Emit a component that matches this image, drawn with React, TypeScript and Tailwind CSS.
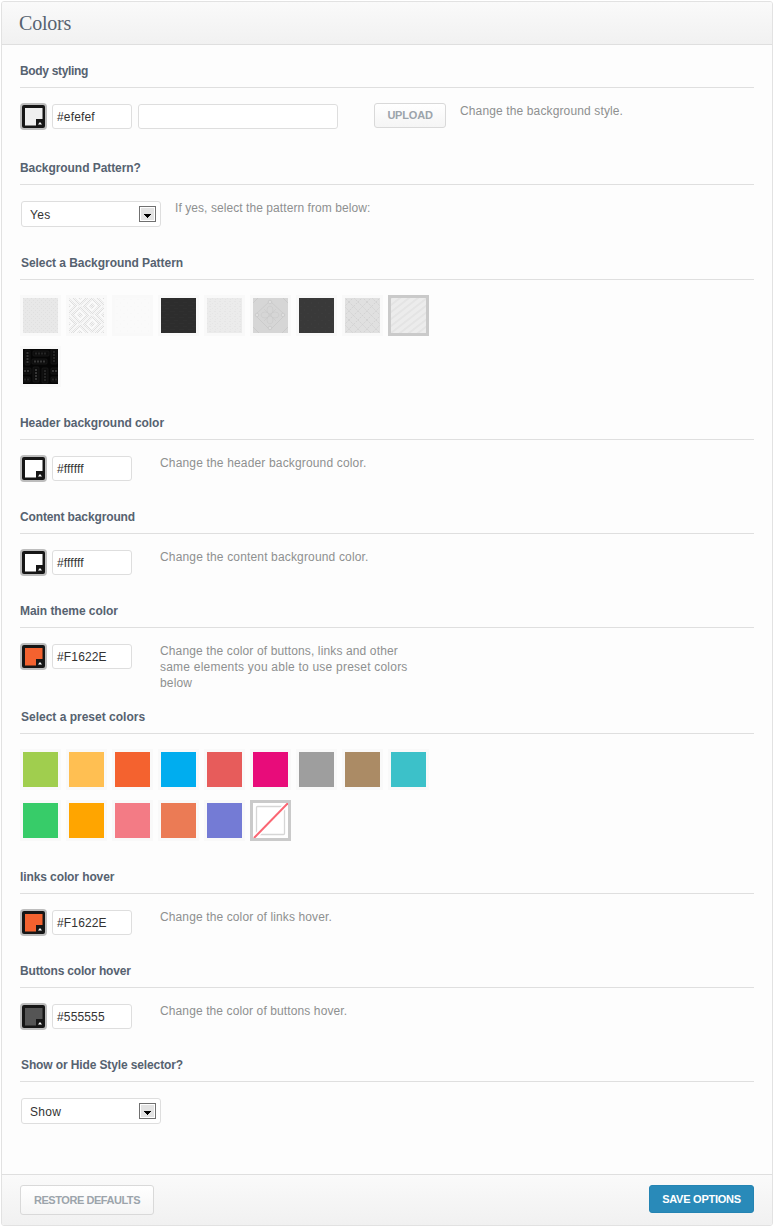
import React from "react";

function Section({ title, className, spacing, children }: { title: string; className: string; spacing: string; children: React.ReactNode }) {
  return (
    <section className={`shrink-0 ${className}`}>
      <h2 className={`flex h-[43px] items-center border-b border-[#dfdfdf] pt-[9px] text-[12px] font-bold text-[#566270] ${spacing}`}>
        <span className="whitespace-nowrap">{title}</span>
      </h2>
      {children}
    </section>
  );
}

function Picker({ color, value }: { color: string; value: string }) {
  return (
    <>
      <svg width="27" height="27" viewBox="0 0 27 27" className="shrink-0">
        <rect width="27" height="27" rx="4" fill="#bdbdbd" />
        <rect x="2" y="2" width="23" height="23" rx="2" fill="#161616" />
        <rect x="5" y="5" width="17.5" height="17.5" fill={color} />
        <rect x="16" y="16" width="8" height="8" fill="#161616" />
        <path d="M18 21.5h4l-2-2.5z" fill="#fff" />
      </svg>
      <div className="ml-[5px] mt-px flex h-[25px] w-[80px] items-center rounded-[3px] border border-[#dedede] bg-white pl-1 text-[12px] text-[#333]">
        <span className="tracking-[0.15px]">{value}</span>
      </div>
    </>
  );
}

function Note({ className = "", children }: { className?: string; children: React.ReactNode }) {
  return <p className={`whitespace-nowrap text-[12px] leading-4 text-[#8e9090] ${className}`}>{children}</p>;
}

function ColorRow({ color, value, spacing = "tracking-[0.16px]", children }: { color: string; value: string; spacing?: string; children: React.ReactNode }) {
  return (
    <div className="flex items-start pt-[15px]">
      <Picker color={color} value={value} />
      <Note className={`ml-7 ${spacing}`}>{children}</Note>
    </div>
  );
}

function Select({ value }: { value: string }) {
  return (
    <div className="ml-px flex h-[26px] w-[140px] shrink-0 items-center justify-between rounded-[3px] border border-[#dedede] bg-white pl-2 pr-1 text-[12px] text-[#333]">
      <span className="mt-px tracking-[0.3px]">{value}</span>
      <svg width="17" height="16" viewBox="0 0 17 16">
        <rect x=".5" y=".5" width="16" height="15" fill="#fff" stroke="#707070" />
        <rect x="2" y="2" width="13" height="12" fill="#e3e3e3" />
        <path d="M5 8h7v1h-1v1h-1v1H9v1H8v-1H7v-1H6V9H5z" fill="#000" />
      </svg>
    </div>
  );
}

const diamonds = [[11, -1], [11, 17], [11, 35], [23, 8], [23, 26], [-1, 8], [-1, 26], [35, -1], [35, 17], [35, 35]];

function Pattern({ index }: { index: number }) {
  const id = `pattern-${index}`;
  const bases = ["#e8e8e8", "#f6f6f6", "#fafafa", "#2d2d2d", "#ebebeb", "#d6d6d6", "#393939", "#e0e0e0", "#ececec", "#050505"];
  return (
    <svg width="35" height="35" viewBox="0 0 35 35">
      <defs>
        {index === 0 && <pattern id={id} width="4" height="4" patternUnits="userSpaceOnUse"><path d="M0 0h1v1H0zM2 2h1v1H2z" fill="#e0e0e0" /></pattern>}
        {index === 1 && <pattern id={id} width="2" height="2" patternUnits="userSpaceOnUse"><path d="M0 0h1v1H0zM1 1h1v1H1z" fill="#dedede" /></pattern>}
        {index === 2 && <pattern id={id} width="7" height="7" patternUnits="userSpaceOnUse"><path d="M1 1h2v1H1zM5 4h1v2H5z" fill="#f8f8f8" /></pattern>}
        {index === 3 && <pattern id={id} width="9" height="6" patternUnits="userSpaceOnUse"><path d="M0 1h5v1H0zM4 4h4v1H4z" fill="#303030" /></pattern>}
        {index === 4 && <pattern id={id} width="5" height="5" patternUnits="userSpaceOnUse"><path d="M0 0h1v1H0zM2 3h2v1H2zM3 1h1v1H3z" fill="#e5e5e5" /></pattern>}
        {index === 6 && <pattern id={id} width="7" height="7" patternUnits="userSpaceOnUse"><path d="M1 1h2v1H1zM5 4h1v2H5z" fill="#3c3c3c" /></pattern>}
        {index === 7 && <pattern id={id} x="4" y="4" width="18" height="18" patternUnits="userSpaceOnUse"><path d="M0 0l18 18M18 0L0 18M9 0l9 9-9 9-9-9z" fill="none" stroke="#cfcfcf" strokeDasharray="2 1" strokeWidth=".8" /></pattern>}
        {index === 8 && <pattern id={id} width="9" height="7" patternUnits="userSpaceOnUse"><path d="M-2 8.5L11-1.5M-2 1.5L2-1.5M7 8.5l4-3" fill="none" stroke="#e4e4e4" strokeWidth="2" /></pattern>}
      </defs>
      <rect width="35" height="35" fill={bases[index]} />
      {index !== 5 && index !== 9 && <rect width="35" height="35" fill={`url(#${id})`} />}
      {index === 1 && diamonds.map(([x, y]) => (
        <g key={`${x},${y}`} transform={`translate(${x} ${y})`} fill="none" stroke="#fafafa">
          <path d="M0-4.5L4.5 0 0 4.5-4.5 0z" strokeWidth="2" />
          <path d="M0-9.5L10 0 0 9.5-10 0z" strokeWidth="1" />
        </g>
      ))}
      {index === 5 && (
        <g fill="none" stroke="#cacaca" strokeWidth=".9">
          <path d="M17 3l15 14-15 15L2 17zM0 5l5-5M30 0l5 5M0 29l6 6M29 35l6-6" />
          <g strokeWidth=".6">
            <ellipse cx="17" cy="12" rx="3" ry="4" /><ellipse cx="17" cy="22" rx="3" ry="4" />
            <ellipse cx="12" cy="17" rx="4" ry="3" /><ellipse cx="22" cy="17" rx="4" ry="3" />
            <path d="M11 11l12 12M23 11L11 23" />
          </g>
          <g fill="#dedede"><circle cx="17" cy="4" r="1.8" /><circle cx="4" cy="17" r="1.8" /><circle cx="30" cy="17" r="1.8" /><circle cx="17" cy="30" r="1.8" /></g>
        </g>
      )}
      {index === 9 && (
        <>
          <g fill="#0c0c0c" stroke="#1a1a1a" strokeWidth=".8">
            <rect x="2" y="1" width="5" height="15" rx="1" /><rect x="10" y="2" width="16" height="5" rx="1" />
            <rect x="28" y="0" width="6" height="15" rx="1" /><rect x="9" y="10" width="15" height="5" rx="1" />
            <rect x="-1" y="19" width="9" height="6" rx="1" /><rect x="10" y="18" width="6" height="15" rx="1" />
            <rect x="19" y="19" width="6" height="15" rx="1" /><rect x="28" y="19" width="8" height="6" rx="1" />
            <rect x="-1" y="28" width="8" height="5" rx="1" /><rect x="28" y="28" width="8" height="5" rx="1" />
          </g>
          <g fill="none" strokeWidth="2" strokeDasharray="2 1">
            <path d="M11 12.5h11M4.5 3v11M1 22h6M13 20v11M29 22h6" stroke="#363636" />
            <path d="M12 4.5h12M31 2v11M1 30.5h6M22 21v11M29 30.5h6" stroke="#242424" />
          </g>
        </>
      )}
    </svg>
  );
}

function Tile({ selected = false, children }: { selected?: boolean; children: React.ReactNode }) {
  return <div className={`size-[41px] border-[3px] ${selected ? "border-[#cacaca]" : "border-[#f9f9f9]"}`}>{children}</div>;
}

const presets = ["#a0ce4e", "#ffbf52", "#f4622f", "#00adef", "#e75c5b", "#e80c7a", "#9e9e9e", "#ab8b65", "#3cc1c9", "#37cc69", "#ffa500", "#f37b85", "#eb7b55", "#747bd5"];

export default function App() {
  return (
    <div className="h-[1228px] w-[775px] bg-white p-px font-['Liberation_Sans',Arial,sans-serif]">
      <main className="flex h-[1225px] w-[772px] flex-col overflow-hidden rounded-[3px] border border-[#e2e2e2] bg-[#fdfdfd]">
        <header className="flex h-[43px] shrink-0 items-center border-b border-[#dfdfdf] bg-linear-to-b from-[#fafafa] to-[#f1f1f1] pl-[17px]">
          <h1 className="font-['Liberation_Serif',serif] text-[20px] leading-6 tracking-[-0.2px] text-[#566270]">Colors</h1>
        </header>
        <div className="flex flex-1 flex-col pl-[18px] pr-[18px]">
          <Section title="Body styling" spacing="tracking-[-0.33px]" className="h-[97px]">
            <div className="flex items-start pt-[15px]">
              <Picker color="#efefef" value="#efefef" />
              <div className="ml-1.5 mt-px h-[25px] w-[200px] rounded-[3px] border border-[#dedede] bg-white" />
              <button className="ml-9 h-[25px] w-[72px] rounded-[3px] border border-[#d9d9d9] bg-linear-to-b from-white to-[#f5f5f5] text-[11px] font-bold tracking-[-0.2px] text-[#9ca4ab]">UPLOAD</button>
              <Note className="ml-3.5 tracking-[0.13px]">Change the background style.</Note>
            </div>
          </Section>
          <Section title="Background Pattern?" spacing="tracking-[-0.06px]" className="h-[95px]">
            <div className="flex items-start pt-4">
              <Select value="Yes" />
              <Note className="-mt-px ml-3.5 tracking-[0.07px]">If yes, select the pattern from below:</Note>
            </div>
          </Section>
          <Section title="Select a Background Pattern" spacing="pl-px tracking-[-0.05px]" className="h-[160px]">
            <div className="flex w-[420px] flex-wrap gap-x-[5px] gap-y-2.5 pt-[15px]">
              {Array.from({ length: 10 }, (_, i) => <Tile key={i} selected={i === 8}><Pattern index={i} /></Tile>)}
            </div>
          </Section>
          <Section title="Header background color" spacing="tracking-[-0.06px]" className="h-[94px]">
            <ColorRow color="#fff" value="#ffffff">Change the header background color.</ColorRow>
          </Section>
          <Section title="Content background" spacing="tracking-[-0.13px]" className="h-[94px]">
            <ColorRow color="#fff" value="#ffffff">Change the content background color.</ColorRow>
          </Section>
          <Section title="Main theme color" spacing="tracking-[-0.05px]" className="h-[106px]">
            <ColorRow color="#f4622f" value="#F1622E">
              <span className="tracking-[0.13px]">Change the color of buttons, links and other</span><br />
              <span className="tracking-[0.22px]">same elements you able to use preset colors</span><br />below
            </ColorRow>
          </Section>
          <Section title="Select a preset colors" spacing="pl-px tracking-[0px]" className="h-[160px]">
            <div className="flex w-[420px] flex-wrap gap-x-[5px] gap-y-2.5 pt-[15px]">
              {presets.map((color) => (
                <Tile key={color}><div className="size-full" style={{ backgroundColor: color }} /></Tile>
              ))}
              <Tile selected>
                <svg width="35" height="35" viewBox="0 0 35 35">
                  <rect width="35" height="35" fill="#fff" />
                  <rect x="3.5" y="3.5" width="28" height="28" rx="1" fill="none" stroke="#d6d6d6" strokeWidth="1.3" />
                  <path d="M1 35L35 0" stroke="#fff" strokeWidth="5" />
                  <path d="M1 35L35 0" stroke="#fa6673" strokeWidth="2" />
                </svg>
              </Tile>
            </div>
          </Section>
          <Section title="links color hover" spacing="tracking-[-0.1px]" className="h-[94px]">
            <ColorRow color="#f4622f" value="#F1622E" spacing="tracking-[0.12px]">Change the color of links hover.</ColorRow>
          </Section>
          <Section title="Buttons color hover" spacing="tracking-[-0.17px]" className="h-[94px]">
            <ColorRow color="#555" value="#555555" spacing="tracking-[0.11px]">Change the color of buttons hover.</ColorRow>
          </Section>
          <Section title="Show or Hide Style selector?" spacing="pl-px tracking-[-0.12px]" className="h-[135px]">
            <div className="pt-4"><Select value="Show" /></div>
          </Section>
        </div>
        <footer className="flex h-[51px] shrink-0 items-start justify-between border-t border-[#dfdfdf] bg-linear-to-b from-[#fafafa] to-[#f1f1f1] px-[18px] pt-2.5">
          <button className="h-[30px] w-[134px] rounded-[3px] border border-[#d9d9d9] bg-linear-to-b from-white to-[#f5f5f5] text-[11px] font-bold tracking-[-0.45px] text-[#9ca4ab]">RESTORE DEFAULTS</button>
          <button className="h-7 w-[105px] rounded-[3px] border border-[#2484b3] bg-[#298ab9] text-[11px] font-bold tracking-[-0.25px] text-white">SAVE OPTIONS</button>
        </footer>
      </main>
    </div>
  );
}
